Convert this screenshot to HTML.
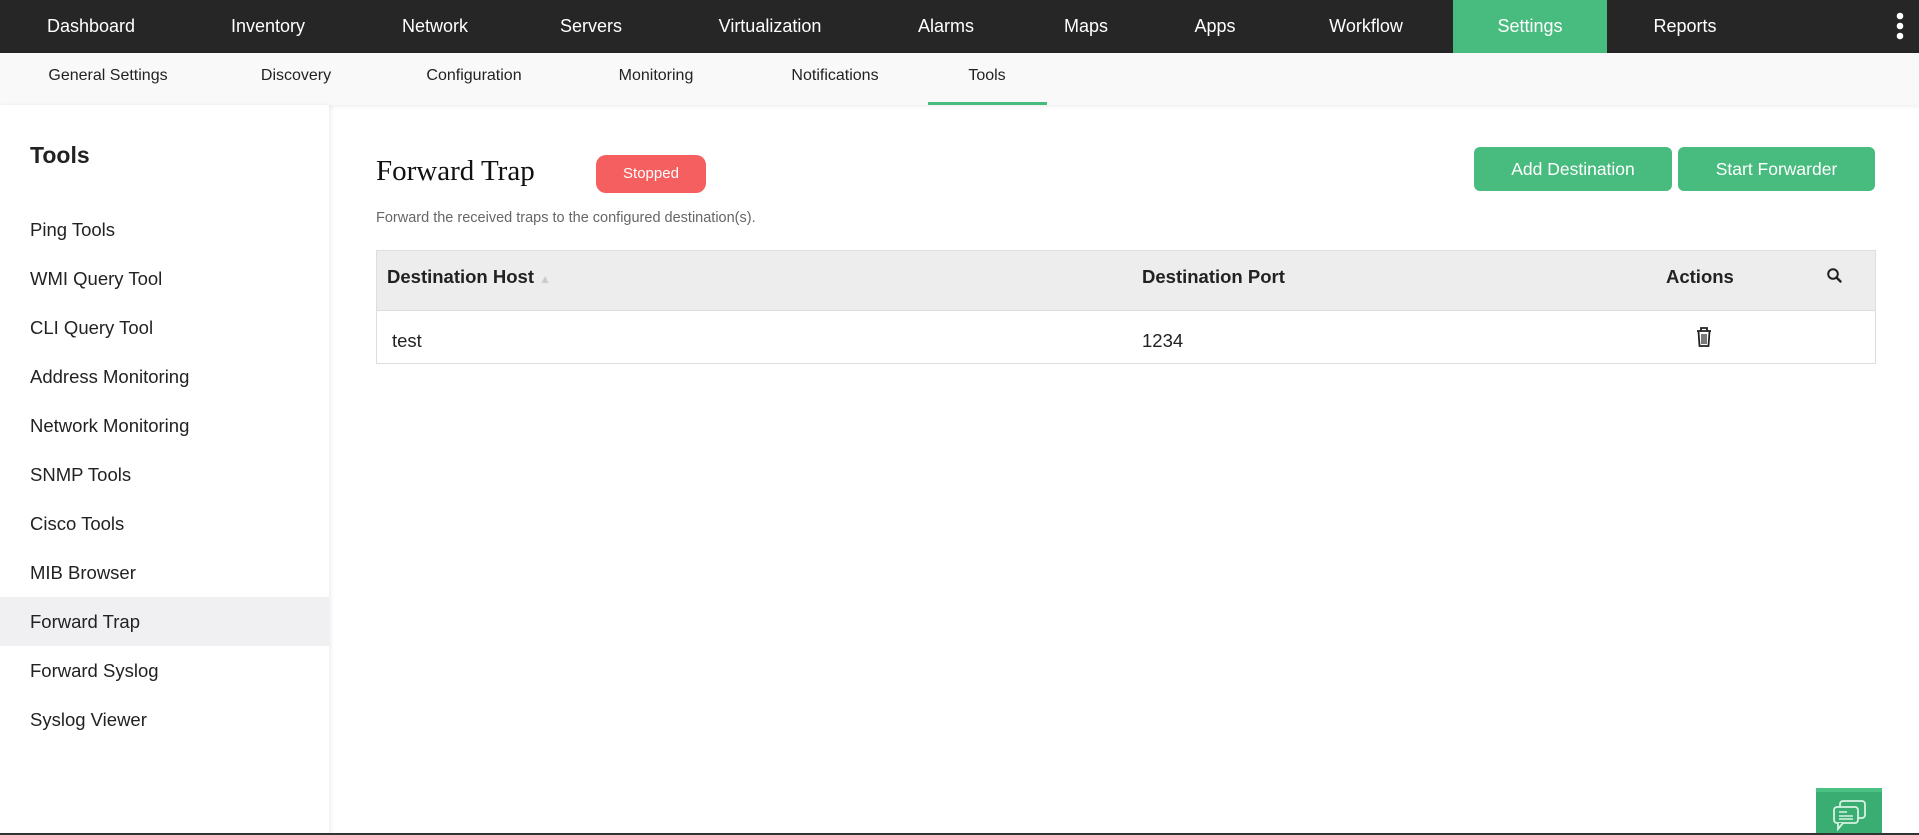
<!DOCTYPE html>
<html><head><meta charset="utf-8"><style>
*{margin:0;padding:0;box-sizing:border-box}
body{width:1919px;height:835px;overflow:hidden;background:#fff;font-family:"Liberation Sans",sans-serif;position:relative;color:#222}
.top{position:absolute;left:0;top:0;width:1919px;height:53px;background:#262626}
.top span{position:absolute;top:0;height:53px;line-height:52px;color:#fff;font-size:18px;transform:translateX(-50%);white-space:nowrap}
.set{position:absolute;left:1453px;top:0;width:154px;height:53px;background:#48bb7e}
.sub{position:absolute;left:0;top:53px;width:1919px;height:52px;background:#f9f9f9;box-shadow:0 2px 4px rgba(0,0,0,.06)}
.sub span{position:absolute;top:0;line-height:45px;font-size:16px;color:#222;transform:translateX(-50%);white-space:nowrap}
.ul{position:absolute;left:928px;top:49px;width:119px;height:3px;background:#48bb7e}
.side{position:absolute;left:0;top:105px;width:329px;height:730px;background:#fff;box-shadow:2px 0 4px rgba(0,0,0,.07)}
.side h2{position:absolute;left:30px;top:37px;font-size:23px;font-weight:bold}
.side div{position:absolute;left:0;width:329px;height:49px;line-height:49px;padding-left:30px;font-size:18.5px;color:#222}
.side .act{background:#f0f0f2}
.title{position:absolute;left:376px;top:155px;font-family:"Liberation Serif",serif;font-size:29px;color:#111}
.badge{position:absolute;left:596px;top:155px;width:110px;height:38px;border-radius:10px;background:#f55f5f;color:#fff;font-size:15px;line-height:38px;text-align:center}
.desc{position:absolute;left:376px;top:210px;font-size:14.5px;color:#666}
.btn{position:absolute;top:147px;height:44px;border-radius:6px;background:#48bb7e;color:#fff;font-size:17.5px;line-height:44px;text-align:center}
.tbl{position:absolute;left:376px;top:250px;width:1500px;height:114px;border:1px solid #ddd}
.th{position:absolute;left:0;top:0;width:1498px;height:60px;background:#ededed;border-bottom:1px solid #ddd}
.tbl b,.tbl i{position:absolute;font-style:normal;font-size:18.5px}
.tbl b{top:-4px;line-height:60px;color:#222}
.tbl i{top:64px;line-height:52px;color:#222}
</style></head><body>
<div class="top">
<div class="set"></div>
<span style="left:91px">Dashboard</span><span style="left:268px">Inventory</span><span style="left:435px">Network</span><span style="left:591px">Servers</span><span style="left:770px">Virtualization</span><span style="left:946px">Alarms</span><span style="left:1086px">Maps</span><span style="left:1215px">Apps</span><span style="left:1366px">Workflow</span><span style="left:1530px">Settings</span><span style="left:1685px">Reports</span>
<svg style="position:absolute;left:1895px;top:12px" width="10" height="28"><circle cx="5" cy="4" r="3.3" fill="#fff"/><circle cx="5" cy="14" r="3.3" fill="#fff"/><circle cx="5" cy="24" r="3.3" fill="#fff"/></svg>
</div>
<div class="sub">
<span style="left:108px">General Settings</span><span style="left:296px">Discovery</span><span style="left:474px">Configuration</span><span style="left:656px">Monitoring</span><span style="left:835px">Notifications</span><span style="left:987px">Tools</span>
<div class="ul"></div>
</div>
<div class="side">
<h2>Tools</h2>
<div style="top:100px">Ping Tools</div>
<div style="top:149px">WMI Query Tool</div>
<div style="top:198px">CLI Query Tool</div>
<div style="top:247px">Address Monitoring</div>
<div style="top:296px">Network Monitoring</div>
<div style="top:345px">SNMP Tools</div>
<div style="top:394px">Cisco Tools</div>
<div style="top:443px">MIB Browser</div>
<div class="act" style="top:492px">Forward Trap</div>
<div style="top:541px">Forward Syslog</div>
<div style="top:590px">Syslog Viewer</div>
</div>
<div class="title">Forward Trap</div>
<div class="badge">Stopped</div>
<div class="desc">Forward the received traps to the configured destination(s).</div>
<div class="btn" style="left:1474px;width:198px">Add Destination</div>
<div class="btn" style="left:1678px;width:197px">Start Forwarder</div>
<div class="tbl">
<div class="th"></div>
<b style="left:10px">Destination Host <span style="color:#ccc;font-size:12px">▲</span></b>
<b style="left:765px">Destination Port</b>
<b style="left:1289px">Actions</b>
<svg style="position:absolute;left:1449px;top:16px" width="18" height="18" viewBox="0 0 18 18"><circle cx="7" cy="7" r="4.8" fill="none" stroke="#222" stroke-width="2"/><path d="M10.5 10.5l4 4" stroke="#222" stroke-width="2.4" stroke-linecap="round"/></svg>
<i style="left:15px">test</i>
<i style="left:765px">1234</i>
<svg style="position:absolute;left:1317px;top:75px" width="20" height="22" viewBox="0 0 20 22"><path d="M3 5h14M7 5V2h6v3" fill="none" stroke="#222" stroke-width="1.8"/><path d="M4.5 5.5l1 14.5h9l1-14.5" fill="none" stroke="#222" stroke-width="1.8"/><path d="M8 8v10M10 8v10M12 8v10" stroke="#222" stroke-width="1.2"/></svg>
</div>
<div style="position:absolute;left:1816px;top:788px;width:66px;height:47px;background:#3aae72;border-top:4px solid #4cc184">
<svg style="position:absolute;left:17px;top:8px" width="34" height="32" viewBox="0 0 34 32"><rect x="7" y="1" width="25" height="17" rx="3" fill="none" stroke="#d8f2e4" stroke-width="1.8"/><rect x="1" y="7" width="24" height="16" rx="3" fill="#3aae72" stroke="#d8f2e4" stroke-width="1.8"/><path d="M5 23v6l5-6" fill="#3aae72" stroke="#d8f2e4" stroke-width="1.8"/><path d="M6 12h8M6 16h14M6 19h14" stroke="#d8f2e4" stroke-width="1.5"/></svg>
</div>
<div style="position:absolute;left:0;top:833px;width:1919px;height:2px;background:#333"></div>
</body></html>
